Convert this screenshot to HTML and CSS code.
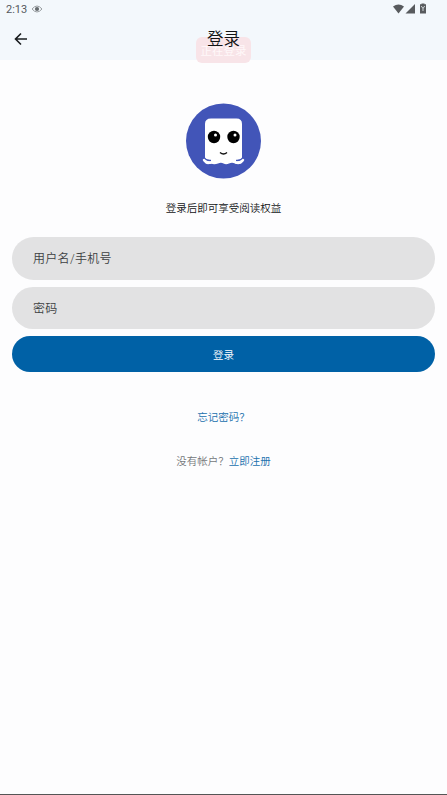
FILE: index.html
```html
<!DOCTYPE html>
<html lang="zh-CN">
<head>
<meta charset="utf-8">
<title>登录</title>
<link rel="stylesheet" href="styles.css">
</head>
<body>
<div class="screen">
  <header class="top">
    <div class="status">
      <span class="clock">2:13</span>
      <svg class="eye" width="12" height="10" viewBox="0 0 12 10"><path d="M1 5Q6-1 11 5Q6 11 1 5Z" fill="none" stroke="#9a9fa2" stroke-width="1"/><circle cx="6" cy="5" r="2.1" fill="#666b6e"/></svg>
      <svg class="system" width="36" height="12" viewBox="0 0 36 12" fill="#585b5e"><path d="M0 3.6Q5.5-.8 11 3.6L5.500 10.500Z"/><path d="M22 1V10.500H12.500Z"/><path d="M28.500 1.300V.5h3v.8h1.500v9.200h-6V1.300Z"/><path d="M28.300 3L30 5.500L31.700 3M30 5.500V8" fill="none" stroke="#dce3e7" stroke-width=".9"/></svg>
    </div>
    <div class="appbar">
      <svg class="back" width="14" height="14" viewBox="0 0 14 14"><path d="M13 7H2M7 1.500L1.500 7L7 12.500" fill="none" stroke="#191c1e" stroke-width="1.600"/></svg>
      <h1 class="title">登录</h1>
      <div class="toast">正在登录</div>
    </div>
  </header>
  <main class="content">
    <svg class="avatar" width="76" height="76" viewBox="0 0 76 76">
      <circle cx="37.500" cy="38" r="37.500" fill="#4255b8"/>
      <path d="M25 15.500H50.500Q56 15.500 56 21V60Q53 62 49 60.500Q46 59 43 60.500Q40 62 37.500 60.500Q35 59 32 60.500Q28 62 25 60.500Q21 62 19 60V21Q19 15.500 25 15.500Z" fill="#fff"/>
      <path d="M18 54.500Q20 58 25 57.500M57 54.500Q55 58 50 57.500" fill="none" stroke="#4255b8" stroke-width="1.500"/>
      <path d="M18 57Q20 60.500 25 59.500M57 57Q55 60.500 50 59.500" fill="none" stroke="#fff" stroke-width="2.500" stroke-linecap="round"/>
      <circle cx="28" cy="34" r="6.200" fill="#000"/><circle cx="47.500" cy="34" r="6.200" fill="#000"/>
      <circle cx="29.500" cy="32" r="1.500" fill="#fff"/><circle cx="49" cy="32" r="1.500" fill="#fff"/>
      <path d="M34 49.500Q37.500 52.500 41 49.500" fill="none" stroke="#111" stroke-width="1.400"/>
    </svg>
    <p class="intro">登录后即可享受阅读权益</p>
    <form class="form">
      <input class="field" type="text" placeholder="用户名/手机号" aria-label="用户名/手机号">
      <input class="field" type="password" placeholder="密码" aria-label="密码">
      <button class="submit" type="button">登录</button>
    </form>
    <a class="forgot">忘记密码？</a>
    <p class="register">没有帐户？<a class="link">立即注册</a></p>
  </main>
</div>
</body>
</html>
```

FILE: styles.css
```css
* { box-sizing: border-box; }
body { margin: 0; font-family: Roboto, "Noto Sans CJK SC", sans-serif; font-weight: 350; color: #111314; }
.screen { height: 795px; background: #fdfdfe; border-bottom: 1px solid #555; overflow: hidden; }
.top { height: 60px; background: #f3f8fc; }
.status { height: 18px; padding: 0 18px 0 6px; display: flex; align-items: center; }
.clock { font-size: 11px; line-height: 18px; padding-top: 1px; font-weight: 400; color: #55595c; }
.eye { margin-left: 4px; }
.system { margin-left: auto; }
.appbar { height: 42px; position: relative; display: flex; align-items: center; padding-left: 14px; }
.title { position: absolute; inset: 0; z-index: 1; margin: 0; text-align: center; font-size: 16.5px; line-height: 44px; font-weight: 350; }
.toast { position: absolute; left: 196px; top: 19px; width: 55px; height: 26px; border-radius: 6px; background: #f8e4e8; color: #fff8f9; text-align: center; font-size: 11.5px; line-height: 28px; font-weight: 400; }
.content { padding: 43px 12px 0; display: flex; flex-direction: column; align-items: center; }
.intro { margin: 20px 0 0; font-size: 10.5px; line-height: 20px; }
.form { align-self: stretch; display: flex; flex-direction: column; gap: 7px; margin-top: 18px; }
.field { height: 43px; padding: 1px 21px 0; border: 0; border-radius: 22px; background: #e2e2e3; font: inherit; font-size: 12px; letter-spacing: .3px; }
.field + .field { height: 42px; padding-top: 2px; }
.field::placeholder { color: #3c3f42; opacity: 1; }
.submit { height: 36px; padding: 0; border: 0; border-radius: 18px; background: #0061a6; color: #fff; font: inherit; font-size: 10.5px; }
.forgot { margin-top: 36px; font-size: 10.5px; line-height: 20px; color: #2070ad; }
.register { margin: 24px 0 0; font-size: 10.5px; line-height: 20px; color: #74777a; }
.link { color: #2070ad; }
```
